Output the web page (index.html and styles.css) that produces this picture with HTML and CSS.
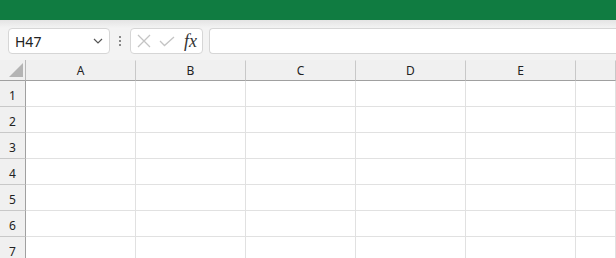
FILE: index.html
```html
<!DOCTYPE html>
<html lang="en">
<head>
    <meta charset="UTF-8">
    <title>Book1 - Excel</title>
    <link rel="stylesheet" href="styles.css">
</head>
<body>

<div class="titlebar"></div>

<div class="toolbar">
    <div class="namebox">
        <span>H47</span>
        <svg class="chevron" width="10" height="6" viewBox="0 0 10 6"><path d="M1 1 L5 5 L9 1" fill="none" stroke="#555" stroke-width="1.2"/></svg>
    </div>
    <div class="grip"><i></i><i></i><i></i></div>
    <div class="fxbox">
        <svg width="14" height="14" viewBox="0 0 14 14"><path d="M1 1 L13 13 M13 1 L1 13" stroke="#c4c4c4" stroke-width="1.3" fill="none"/></svg>
        <svg width="16" height="11" viewBox="0 0 16 11"><path d="M1 5 L5.5 9.5 L15 1" stroke="#c4c4c4" stroke-width="1.3" fill="none"/></svg>
        <span class="fx">fx</span>
    </div>
    <div class="formula"></div>
</div>

<div class="sheet">
    <div class="corner"><span class="tri"></span></div>
    <div class="colhead">A</div>
    <div class="colhead">B</div>
    <div class="colhead">C</div>
    <div class="colhead">D</div>
    <div class="colhead">E</div>
    <div class="colhead"></div>
</div>

<script>
    // Fill in the grid rows
    const sheet = document.querySelector('.sheet');
    for (let r = 1; r <= 7; r++) {
        const head = document.createElement('div');
        head.className = 'rowhead';
        head.textContent = r;
        sheet.appendChild(head);
        for (let c = 0; c < 6; c++) {
            const cell = document.createElement('div');
            cell.className = 'cell';
            sheet.appendChild(cell);
        }
    }
</script>

</body>
</html>
```

FILE: styles.css
```css
body {
    margin: 0;
    width: 616px;
    height: 258px;
    overflow: hidden;
    font-family: "Noto Sans", "Open Sans", sans-serif;
    background-color: #ffffff;
}
.titlebar {
    height: 20px;
    background-color: #107c41;
}
.toolbar {
    height: 40px;
    box-sizing: border-box;
    padding: 8px 0 0 8px;
    display: flex;
    align-items: flex-start;
    background: linear-gradient(#e4e4e4, #f3f3f3 8px);
}
.namebox {
    width: 102px;
    height: 26px;
    box-sizing: border-box;
    border: 1px solid #d6d6d6;
    border-radius: 4px;
    background-color: white;
    display: flex;
    align-items: center;
    justify-content: space-between;
    padding: 0 6px 0 6px;
    font-size: 14px;
    color: #222;
}
.namebox span {
    padding-top: 1px;
}
.grip {
    width: 20px;
    height: 26px;
    display: flex;
    flex-direction: column;
    align-items: center;
    justify-content: center;
    gap: 2px;
}
.grip i {
    width: 2px;
    height: 2px;
    background-color: #888;
}
.fxbox {
    width: 73px;
    height: 26px;
    box-sizing: border-box;
    border: 1px solid #d6d6d6;
    border-radius: 4px;
    background-color: white;
    display: flex;
    align-items: center;
    gap: 8px;
    padding-left: 6px;
}
.fx {
    font-family: "Liberation Serif", serif;
    font-style: italic;
    font-size: 18px;
    color: #333;
    margin-left: 1px;
}
.formula {
    flex: 1;
    height: 26px;
    margin-left: 6px;
    box-sizing: border-box;
    border: 1px solid #d6d6d6;
    border-right: none;
    border-radius: 4px 0 0 4px;
    background-color: white;
}
.sheet {
    display: grid;
    grid-template-columns: 26px repeat(5, 110px) 40px;
    grid-template-rows: 21px;
    grid-auto-rows: 26px;
}
.sheet > div {
    box-sizing: border-box;
}
.corner {
    background-color: #f0f0f0;
    border-right: 1px solid #b8b8b8;
    border-bottom: 1px solid #a0a0a0;
    position: relative;
}
.tri {
    position: absolute;
    right: 2px;
    bottom: 3px;
    width: 0;
    height: 0;
    border-left: 14px solid transparent;
    border-bottom: 14px solid #b4b4b4;
}
.colhead {
    background-color: #f0f0f0;
    border-right: 1px solid #c8c8c8;
    border-bottom: 1px solid #a0a0a0;
    border-top: 1px solid #f0f0f0;
    font-size: 12px;
    color: #222;
    display: flex;
    align-items: center;
    justify-content: center;
}
.rowhead {
    background-color: #f0f0f0;
    border-right: 1px solid #a0a0a0;
    border-bottom: 1px solid #c8c8c8;
    font-size: 12px;
    color: #222;
    display: flex;
    align-items: flex-end;
    justify-content: center;
    padding-bottom: 2px;
}
.cell {
    border-right: 1px solid #e1e1e1;
    border-bottom: 1px solid #e1e1e1;
}
```
